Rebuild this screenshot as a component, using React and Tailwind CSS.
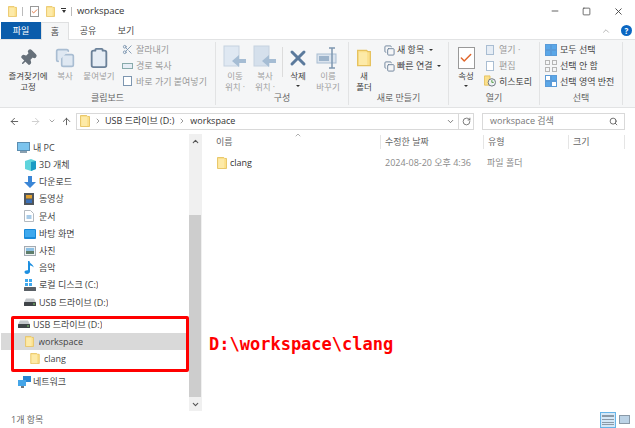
import React from "react";
import { Pin, Copy, Clipboard, Scissors, ArrowLeft, ArrowRight, ArrowUp, ChevronDown, ChevronUp, ChevronRight, RotateCw, Search, X, Minus, Square, Check } from "lucide-react";

const Folder = ({ w = 11, h = 13 }) => (
  <svg width={w} height={h} viewBox="0 0 11 13" className="shrink-0">
    <path d="M0.5 0.5h7l1 1h2v11h-10z" fill="#fbe08c" stroke="#e6c25f" />
    <rect x="1.5" y="2" width="6.5" height="10" fill="#fdeaa8" />
  </svg>
);

const Drive = () => (
  <svg width="12" height="8" viewBox="0 0 12 8" className="shrink-0">
    <path d="M2 0.5h8l2 4h-12z" fill="#c4c8cc" />
    <rect y="4" width="12" height="4" rx="0.5" fill="#3f4448" />
    <rect x="9" y="5.5" width="2" height="1" fill="#7fd06a" />
  </svg>
);

const icons = {
  pc: (
    <svg width="13" height="12" viewBox="0 0 13 12">
      <rect x="0.5" y="0.5" width="12" height="8" fill="#7cc4ee" stroke="#5b8db0" />
      <rect x="3" y="9" width="7" height="2" fill="#8aa0b0" />
    </svg>
  ),
  cube: (
    <svg width="12" height="12" viewBox="0 0 12 12">
      <path d="M1 2l6-2 5 2v8l-5 2-6-2z" fill="#5fd4dc" />
      <path d="M7 3l5-1v8l-5 2z" fill="#1a9bc4" />
    </svg>
  ),
  down: (
    <svg width="12" height="12" viewBox="0 0 12 12">
      <path d="M4 0h4v6h4l-6 6-6-6h4z" fill="#3b86d6" />
    </svg>
  ),
  video: (
    <svg width="10" height="12" viewBox="0 0 10 12">
      <rect width="10" height="12" fill="#50565c" />
      <rect x="2" y="2" width="6" height="3.5" fill="#e0a030" />
      <rect x="2" y="6.5" width="6" height="3.5" fill="#3a70b8" />
    </svg>
  ),
  doc: (
    <svg width="10" height="12" viewBox="0 0 10 12">
      <path d="M0.5 0.5h6l3 3v8h-9z" fill="#fff" stroke="#b4bac0" />
      <rect x="2.5" y="5" width="5" height="4" fill="#a8cbe8" />
    </svg>
  ),
  desktop: (
    <svg width="12" height="10" viewBox="0 0 12 10">
      <rect width="12" height="10" rx="1" fill="#1a8ad8" />
      <rect x="1" y="1" width="10" height="7" fill="#3fa9ee" />
    </svg>
  ),
  photo: (
    <svg width="12" height="10" viewBox="0 0 12 10">
      <rect x="0.5" y="0.5" width="11" height="9" fill="#eef1f4" stroke="#a4abb2" />
      <rect x="2" y="2" width="8" height="3" fill="#8cc0e4" />
      <rect x="2" y="5" width="8" height="3" fill="#5e7d6a" />
    </svg>
  ),
  music: (
    <svg width="10" height="13" viewBox="0 0 10 13">
      <path d="M4 0h1.5c0 3 4 3 4 6.5-1-1.5-2.5-2-3.5-2V10.5C6 12 4.5 13 3 13S0.5 12 0.5 11 1.800 9 4 9.300z" fill="#1d8fe0" />
    </svg>
  ),
  local: (
    <svg width="12" height="12" viewBox="0 0 12 12">
      <rect x="1" y="0" width="3" height="3" fill="#3fa9ee" />
      <rect x="5" y="0" width="3" height="3" fill="#3fa9ee" />
      <rect x="1" y="4" width="3" height="3" fill="#3fa9ee" />
      <rect x="5" y="4" width="3" height="3" fill="#3fa9ee" />
      <rect y="8" width="12" height="4" rx="0.5" fill="#5a6066" />
    </svg>
  ),
  net: (
    <svg width="13" height="12" viewBox="0 0 13 12">
      <rect x="5" y="0" width="8" height="6" fill="#2a86d2" />
      <rect x="0" y="4" width="8" height="6" fill="#45a5e8" />
      <rect x="3" y="10" width="3" height="2" fill="#6b7680" />
    </svg>
  ),
};

const navTop = [
  [icons.cube, "3D 개체"],
  [icons.down, "다운로드"],
  [icons.video, "동영상"],
  [icons.doc, "문서"],
  [icons.desktop, "바탕 화면"],
  [icons.photo, "사진"],
  [icons.music, "음악"],
  [icons.local, "로컬 디스크 (C:)"],
  [<Drive />, "USB 드라이브 (D:)"],
];

const NavRow = ({ pl, icon, label, active }) => (
  <div className={`flex h-[17.2px] items-center ${pl} ${active ? "bg-[#d9d9d9]" : ""}`}>
    <div className="flex w-[14px] shrink-0 items-center justify-start">{icon}</div>
    <span className="truncate">{label}</span>
  </div>
);

const BigButton = ({ w, icon, lines, faded, caret }) => (
  <div className={`flex shrink-0 flex-col items-center ${w} ${faded ? "text-[#a0a0a0]" : "text-[#444]"}`}>
    <div className="flex h-[25px] shrink-0 items-center justify-center">{icon}</div>
    <div className="flex shrink-0 flex-col items-center text-[8.5px] leading-[11px]">
      {lines.map((l) => (
        <span key={l} className="whitespace-nowrap">{l}</span>
      ))}
      {caret && <span className="mt-[4px] h-0 w-0 border-x-[2px] border-t-[2px] border-x-transparent border-t-[#333]" />}
    </div>
  </div>
);

const SmallRow = ({ icon, label, faded }) => (
  <div className={`flex h-[15.8px] items-center gap-[3px] whitespace-nowrap ${faded ? "text-[#9a9a9a]" : "text-[#444]"}`}>
    <div className="flex w-[12px] shrink-0 justify-center">{icon}</div>
    <span>{label}</span>
  </div>
);

const Group = ({ w, label, children }) => (
  <div className={`flex h-full shrink-0 flex-col border-r border-[#e2e3e4] ${w}`}>
    <div className="flex h-[52px] flex-1 pt-[3px]">{children}</div>
    <div className="pb-[1px] text-center leading-[12px] text-[#666]">{label}</div>
  </div>
);

const Grid4 = ({ a, b, c, d }) => (
  <svg width="12" height="12" viewBox="0 0 12 12">
    <rect x="0.5" y="0.5" width="5" height="5" fill={a} stroke="#5a9bd8" />
    <rect x="6.500" y="0.5" width="5" height="5" fill={b} stroke="#5a9bd8" />
    <rect x="0.5" y="6.5" width="5" height="5" fill={c} stroke="#5a9bd8" />
    <rect x="6.500" y="6.5" width="5" height="5" fill={d} stroke="#5a9bd8" />
  </svg>
);

const Page = ({ fill = "#dfe8f2" }) => (
  <svg width="24" height="26" viewBox="0 0 24 26">
    <rect x="1" y="1" width="15" height="20" fill={fill} stroke="#c6d2e0" />
    <path d="M23 14h-7v-4l-7 6 7 6v-4h7z" fill="#a6bdd4" />
  </svg>
);

const Rename = () => (
  <svg width="24" height="22" viewBox="0 0 24 22">
    <rect x="1" y="7" width="19" height="9" fill="#dbe4ee" stroke="#a9bdd2" />
    <rect x="3" y="9" width="10" height="5" fill="#9db4cb" />
    <path d="M13 1h6M13 21h6M16 1v20" stroke="#7d96b0" strokeWidth="1.500" fill="none" />
  </svg>
);

const History = () => (
  <svg width="13" height="12" viewBox="0 0 13 12">
    <path d="M0.5 0.5h6v10h-6z" fill="#fbe08c" stroke="#e6c25f" />
    <circle cx="8.500" cy="7.500" r="4" fill="#eef1f4" stroke="#66707a" />
    <path d="M8.500 5v2.500h2" stroke="#4a9a3a" fill="none" />
  </svg>
);

const Caret = () => <span className="ml-[3px] inline-block h-0 w-0 border-x-[2px] border-t-[2px] border-x-transparent border-t-[#333] align-middle" />;

export default function App() {
  return (
    <div className="flex h-[428px] w-[635px] flex-col overflow-hidden bg-white text-[9px] text-[#444] [font-family:'Open_Sans','Noto_Sans_CJK_KR',sans-serif]">
      {/* title bar */}
      <div className="flex h-[22px] shrink-0 items-center pl-[8px]">
        <Folder w={9} h={11} />
        <div className="ml-[5px] h-[9px] w-px bg-[#bbb]" />
        <div className="ml-[7px] flex h-[11px] w-[9px] items-center justify-center border border-[#999] bg-white">
          <Check size={7} strokeWidth={3} color="#e0662b" />
        </div>
        <div className="ml-[7px]"><Folder w={9} h={11} /></div>
        <div className="ml-[6px] flex h-[6px] w-[5px] flex-col items-center">
          <div className="mb-[1px] h-px w-[5px] bg-[#333]" />
          <div className="h-0 w-0 border-x-[2.5px] border-t-[3px] border-x-transparent border-t-[#333]" />
        </div>
        <div className="ml-[5px] h-[9px] w-px bg-[#bbb]" />
        <span className="ml-[5px] text-[9.5px] text-[#333]">workspace</span>
        <div className="ml-auto flex items-center gap-[22px] pr-[11px] text-[#444]">
          <Minus size={10} />
          <Square size={9} />
          <X size={11} />
        </div>
      </div>

      {/* tabs */}
      <div className="flex h-[17px] shrink-0 items-stretch pl-px">
        <div className="flex w-[40px] items-center justify-center bg-[#0a5cab] text-white">파일</div>
        <div className="z-10 mb-[-1px] flex w-[28px] items-center justify-center border-x border-t border-[#dfe0e1] bg-[#f5f6f7]">홈</div>
        <div className="flex w-[38px] items-center justify-center">공유</div>
        <div className="flex w-[38px] items-center justify-center">보기</div>
        <div className="ml-auto flex items-center gap-[10px] pr-[3px]">
          <ChevronUp size={10} color="#aaa" />
          <div className="flex h-[11px] w-[11px] items-center justify-center rounded-full bg-[#0a66c2] text-[8px] font-bold text-white">?</div>
        </div>
      </div>

      {/* ribbon */}
      <div className="flex h-[69px] shrink-0 border-y border-[#e2e3e4] bg-[#f5f6f7] py-[2px]">
        <Group w="w-[216px]" label="클립보드">
          <BigButton w="w-[50px] ml-[3px]" icon={<Pin size={18} fill="#66707a" color="#66707a" className="rotate-45" />} lines={["즐겨찾기에", "고정"]} />
          <BigButton w="w-[22px] ml-px" faded icon={<Copy size={20} color="#a9bdd2" fill="#dfe8f2" />} lines={["복사"]} />
          <BigButton w="w-[36px] ml-[5px]" faded icon={<Clipboard size={22} color="#6b8199" fill="#e6edf5" />} lines={["붙여넣기"]} />
          <div className="-mt-[3px] ml-[4px] flex flex-col text-[#9a9a9a]">
            <SmallRow faded icon={<Scissors size={11} color="#7d96b0" />} label="잘라내기" />
            <SmallRow faded icon={<div className="h-[6px] w-[11px] border border-[#8aa] bg-[#e6edf5]" />} label="경로 복사" />
            <SmallRow faded icon={<div className="h-[10px] w-[9px] border border-[#7d96b0] bg-white" />} label="바로 가기 붙여넣기" />
          </div>
        </Group>
        <Group w="w-[133px]" label="구성">
          <BigButton w="w-[30px] ml-[4px]" faded icon={<Page />} lines={["이동", "위치 ·"]} />
          <BigButton w="w-[30px]" faded icon={<Page fill="#d5e0ec" />} lines={["복사", "위치 ·"]} />
          <div className="ml-[2px] mt-[2px] h-[30px] w-px bg-[#dcdcdc]" />
          <BigButton w="w-[30px]" icon={<X size={24} strokeWidth={3} color="#5b7a9c" />} lines={["삭제"]} caret />
          <BigButton w="w-[30px]" faded icon={<Rename />} lines={["이름", "바꾸기"]} />
        </Group>
        <Group w="w-[100px]" label="새로 만들기">
          <BigButton w="w-[30px]" icon={<Folder w={14} h={20} />} lines={["새", "폴더"]} />
          <div className="-mt-[3px] ml-[5px] flex flex-col">
            <div className="flex h-[16px] items-center gap-[2px] whitespace-nowrap"><Copy size={11} color="#6b8199" />새 항목<Caret /></div>
            <div className="flex h-[16px] items-center gap-[2px] whitespace-nowrap"><Copy size={11} color="#6b8199" />빠른 연결<Caret /></div>
          </div>
        </Group>
        <Group w="w-[91px]" label="열기">
          <BigButton w="w-[34px]" icon={<div className="flex h-[22px] w-[17px] items-center justify-center border border-[#999] bg-white"><Check size={14} strokeWidth={2.500} color="#e0662b" /></div>} lines={["속성"]} caret />
          <div className="-mt-[3px] ml-px flex flex-col">
            <SmallRow faded icon={<div className="h-[10px] w-[8px] border border-[#a9bdd2] bg-[#e6edf5]" />} label="열기 ·" />
            <SmallRow faded icon={<div className="h-[10px] w-[8px] border border-[#a9bdd2] bg-white" />} label="편집" />
            <SmallRow icon={<History />} label="히스토리" />
          </div>
        </Group>
        <Group w="w-[83px]" label="선택">
          <div className="-mt-[3px] ml-[5px] flex flex-col">
            <SmallRow icon={<Grid4 a="#5aa7e8" b="#5aa7e8" c="#5aa7e8" d="#5aa7e8" />} label="모두 선택" />
            <SmallRow icon={<svg width="12" height="12" viewBox="0 0 12 12" fill="none" stroke="#b5b5b5"><rect x="0.5" y="0.5" width="4" height="4" /><rect x="7.500" y="0.5" width="4" height="4" /><rect x="0.5" y="7.500" width="4" height="4" /><rect x="7.500" y="7.500" width="4" height="4" /></svg>} label="선택 안 함" />
            <SmallRow icon={<Grid4 a="#fff" b="#5aa7e8" c="#5aa7e8" d="#fff" />} label="선택 영역 반전" />
          </div>
        </Group>
      </div>

      {/* address row */}
      <div className="flex h-[26px] shrink-0 items-center text-[#444]">
        <div className="flex w-[76px] shrink-0 items-center pl-[9px]">
          <ArrowLeft size={11} color="#555" />
          <ArrowRight size={11} color="#ccc" className="ml-[10px]" />
          <ChevronDown size={8} color="#777" className="ml-[7px]" />
          <ArrowUp size={11} color="#555" className="ml-[5px]" />
        </div>
        <div className="flex h-[17px] w-[398px] shrink-0 items-center border border-[#d9d9d9] pl-[3px]">
          <Folder w={10} h={12} />
          <ChevronRight size={8} color="#666" className="ml-[4px]" />
          <span className="ml-[3px] text-[#333]">USB 드라이브 (D:)</span>
          <ChevronRight size={8} color="#666" className="ml-[4px]" />
          <span className="ml-[4px] text-[#333]">workspace</span>
          <ChevronDown size={9} color="#555" className="ml-auto mr-[3px]" />
          <div className="flex h-full w-[15px] items-center justify-center border-l border-[#d9d9d9]">
            <RotateCw size={9} color="#555" />
          </div>
        </div>
        <div className="ml-[8px] flex h-[17px] w-[143px] shrink-0 items-center justify-between border border-[#d9d9d9] pl-[7px] pr-[6px] text-[#777]">
          <span>workspace 검색</span>
          <Search size={9} color="#444" />
        </div>
      </div>

      {/* main */}
      <div className="relative flex min-h-0 flex-1">
        <div className="w-[189px] shrink-0 pt-[5px] pl-px">
          <NavRow pl="pl-[16px]" icon={icons.pc} label={<span className="ml-[2px]">내 PC</span>} />
          {navTop.map(([icon, label]) => (
            <NavRow key={label} pl="pl-[23px]" icon={icon} label={<span className="ml-px">{label}</span>} />
          ))}
          <div className="h-[5px]" />
          <NavRow pl="pl-[17px]" icon={<Drive />} label={<span className="ml-px">USB 드라이브 (D:)</span>} />
          <NavRow pl="pl-[24px]" icon={<Folder w={9} h={11} />} label={<span className="-ml-px">workspace</span>} active />
          <NavRow pl="pl-[29px]" icon={<Folder w={10} h={11} />} label="clang" />
          <div className="h-[6px]" />
          <NavRow pl="pl-[17px]" icon={icons.net} label={<span className="ml-px">네트워크</span>} />
        </div>

        {/* scrollbar */}
        <div className="flex w-[12px] shrink-0 flex-col bg-[#f0f0f0]">
          <div className="flex h-[14px] items-center justify-center"><ChevronUp size={9} strokeWidth={3} color="#555" /></div>
          <div className="mt-[67px] h-[182px] bg-[#cdcdcd]" />
          <div className="mt-auto flex h-[13px] items-center justify-center"><ChevronDown size={9} strokeWidth={3} color="#555" /></div>
        </div>

        {/* file list */}
        <div className="relative min-w-0 flex-1 border-l border-[#f0f0f0]">
          <div className="relative flex h-[16px] items-center text-[#666]">
            <ChevronUp size={8} color="#888" className="absolute left-[92px] top-[-3px]" />
            <div className="w-[178px] pl-[14px]">이름</div>
            <div className="w-[103px] border-l border-[#e5e5e5] pl-[4px]">수정한 날짜</div>
            <div className="w-[85px] border-l border-[#e5e5e5] pl-[4px]">유형</div>
            <div className="w-[57px] border-x border-[#e5e5e5] pl-[4px]">크기</div>
          </div>
          <div className="mt-[6px] flex h-[14px] items-center">
            <div className="flex w-[178px] items-center pl-[15px] text-[#333]">
              <Folder w={10} h={12} />
              <span className="ml-[3px]">clang</span>
            </div>
            <div className="w-[103px] pl-[5px] text-[#8a8a8a]">2024-08-20 오후 4:36</div>
            <div className="pl-[4px] text-[#8a8a8a]">파일 폴더</div>
          </div>
          <div className="absolute left-[7px] top-[200px] text-[17px] font-bold leading-[20px] text-[#ff0000] [font-family:'DejaVu_Sans_Mono',monospace]">
            D:\workspace\clang
          </div>
        </div>

        {/* highlight around the drive tree */}
        <div className="absolute left-[11px] top-[182px] h-[56px] w-[178px] rounded-[2px] border-[3px] border-[#ff0000]" />
      </div>

      {/* status bar */}
      <div className="flex h-[17px] shrink-0 items-center pl-[11px] text-[#666]">
        <span>1개 항목</span>
        <div className="ml-auto flex items-center gap-[2px] pr-[5px]">
          <div className="flex h-[16px] w-[16px] items-center justify-center border border-[#66b4e8] bg-[#d5e8f7]">
            <div className="h-[10px] w-[12px] border-y border-[#8a9aa8] bg-[repeating-linear-gradient(#8a9aa8_0_1px,transparent_1px_3px)]" />
          </div>
          <div className="flex h-[14px] w-[12px] items-center justify-center">
            <div className="h-[9px] w-[11px] border border-[#8a9aa8] bg-[#bcd3e6]" />
          </div>
        </div>
      </div>
    </div>
  );
}
